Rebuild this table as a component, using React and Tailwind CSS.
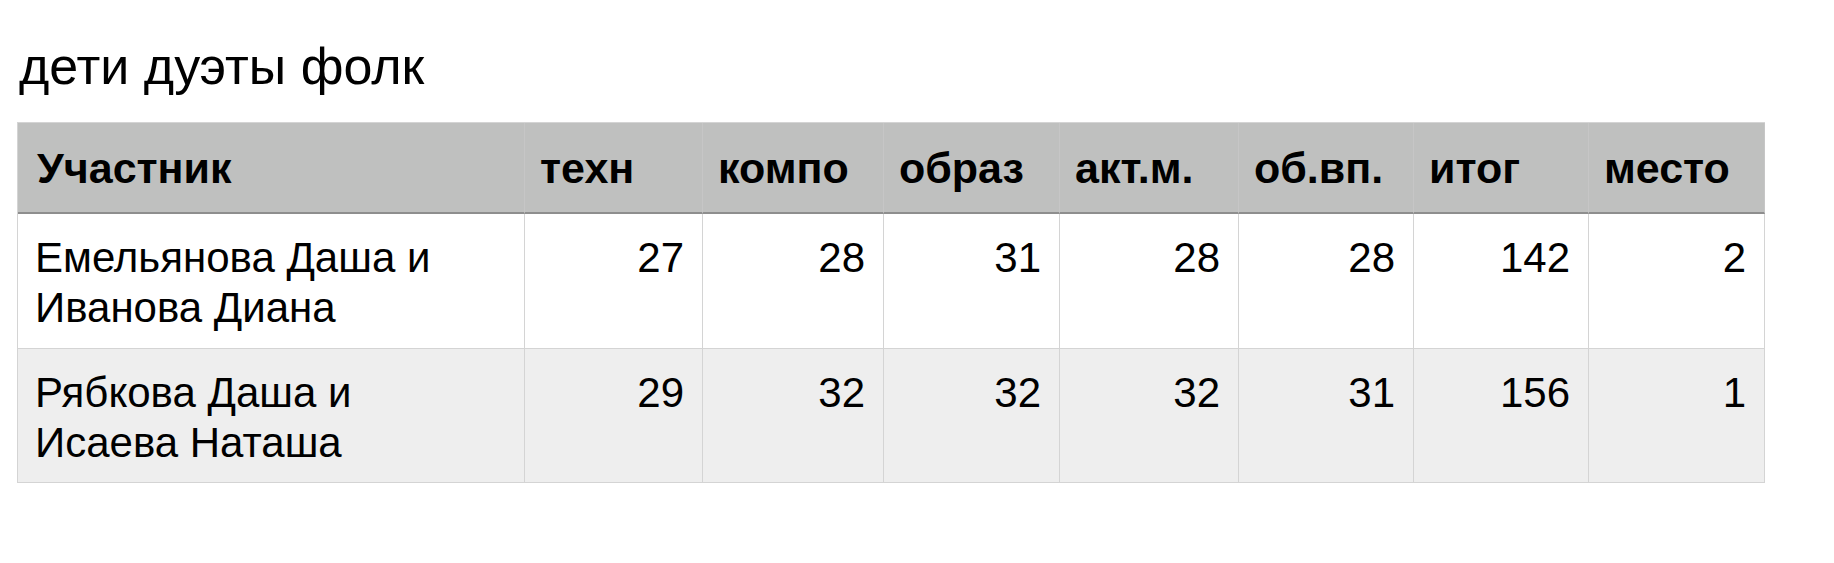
import React from "react";

const cols = ["техн", "компо", "образ", "акт.м.", "об.вп.", "итог", "место"];
const rows = [
  { name: ["Емельянова Даша и", "Иванова Диана"], vals: [27, 28, 31, 28, 28, 142, 2], bg: "bg-white", h: "h-[135px]" },
  { name: ["Рябкова Даша и", "Исаева Наташа"], vals: [29, 32, 32, 32, 31, 156, 1], bg: "bg-[#eeeeee]", h: "h-[134px]" },
];

export default function App() {
  return (
    <div className="w-[1834px] h-[563px] bg-white text-black font-['Liberation_Sans',Arial,sans-serif]">
      <div className="pl-[19px] pt-[38px] text-[52px] leading-[56px]">дети дуэты фолк</div>
      <div className="ml-[17px] mt-[28px] w-max grid grid-cols-[507px_178px_181px_176px_179px_175px_175px_176px] border-l border-t border-[#d4d4d4]">
        <div className="h-[91px] bg-[#bfc0bf] border-r border-r-[#c6c6c6] border-b-2 border-b-[#8e8e8e] pl-[19px] flex items-center text-[43px] leading-[50px] font-bold">
          Участник
        </div>
        {cols.map((c) => (
          <div
            key={c}
            className="h-[91px] bg-[#bfc0bf] border-r border-r-[#c6c6c6] border-b-2 border-b-[#8e8e8e] pl-[15px] flex items-center text-[43px] leading-[50px] font-bold"
          >
            {c}
          </div>
        ))}
        {rows.map((r, i) => (
          <React.Fragment key={i}>
            <div className={`${r.h} ${r.bg} border-r border-b border-[#d4d4d4] pl-[17px] pt-[19px] text-[42px] leading-[50px]`}>
              {r.name[0]}
              <br />
              {r.name[1]}
            </div>
            {r.vals.map((v, j) => (
              <div
                key={j}
                className={`${r.h} ${r.bg} border-r border-b border-[#d4d4d4] pr-[18px] pt-[19px] text-right text-[42px] leading-[50px]`}
              >
                {v}
              </div>
            ))}
          </React.Fragment>
        ))}
      </div>
    </div>
  );
}
